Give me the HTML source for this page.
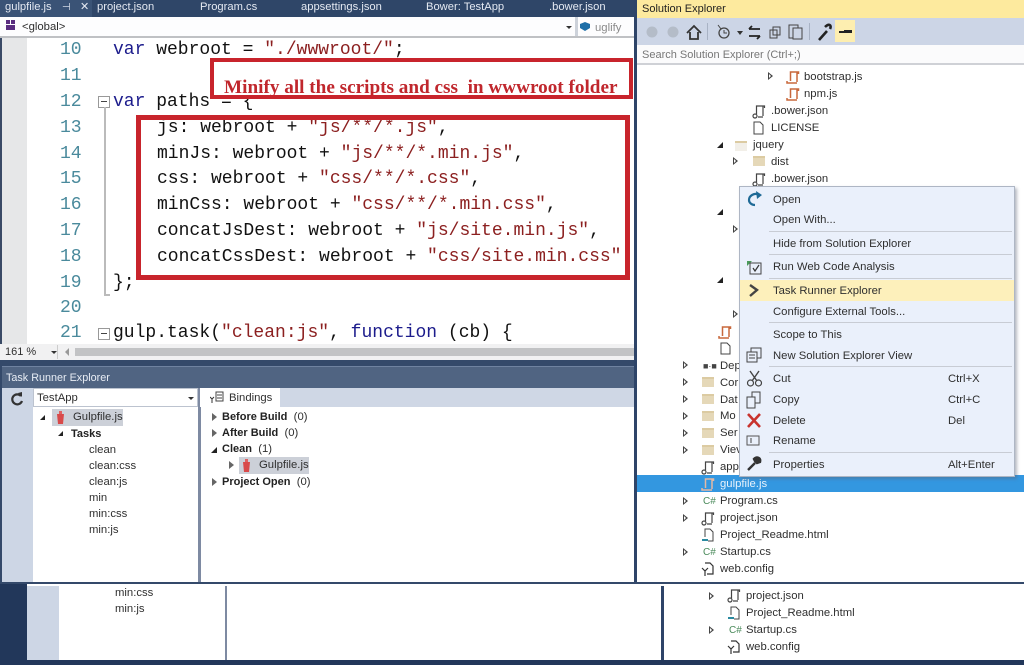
<!DOCTYPE html>
<html><head><meta charset="utf-8"><style>
html,body{margin:0;padding:0;width:1024px;height:665px;overflow:hidden;background:#fff}
div,span.a,svg{position:absolute}
.t{position:absolute;font:11.3px "Liberation Sans",sans-serif;color:#2f2f2f;white-space:pre;line-height:16px}
.t b{font-size:11px;color:#222}
.m{position:absolute;font:18px "Liberation Mono",monospace;color:#111;white-space:pre;line-height:22px;left:157px}
.n{position:absolute;font:18px "Liberation Mono",monospace;color:#4a8a9c;left:60px;line-height:22px}
.kw{color:#1c1c8c}.st{color:#8c2020}
.tab{position:absolute;top:0;font:11.2px "Liberation Sans",sans-serif;color:#e4e9f2;line-height:15px;white-space:pre}
.tri{position:absolute;width:0;height:0;border-left:5px solid #444;border-top:4.5px solid transparent;border-bottom:4.5px solid transparent}
.tri:after{content:"";position:absolute;left:-4px;top:-2.5px;width:0;height:0;border-left:2.5px solid #fff;border-top:2.5px solid transparent;border-bottom:2.5px solid transparent}
.open{position:absolute;width:0;height:0;border-bottom:6px solid #222;border-left:6px solid transparent}
.fold{position:absolute;width:12px;height:8px;background:#e5d8b8;border-top:2px solid #dccba2}
.sep{position:absolute;left:769px;width:243px;height:1px;background:#c8ccd4}
</style></head><body>

<!-- Tabs bar -->
<div style="left:0;top:0;width:634px;height:17px;background:#2f4668"></div>
<div style="left:0;top:0;width:92px;height:17px;background:#3a5376"></div>
<span class="tab" style="left:5px;">gulpfile.js</span>
<span class="tab" style="left:62px;font-size:10px">⊣</span>
<span class="tab" style="left:80px;">✕</span>
<span class="tab" style="left:97px;">project.json</span>
<span class="tab" style="left:200px;">Program.cs</span>
<span class="tab" style="left:301px;">appsettings.json</span>
<span class="tab" style="left:426px;">Bower: TestApp</span>
<span class="tab" style="left:549px;">.bower.json</span>

<!-- Nav bar -->
<div style="left:0;top:17px;width:634px;height:19px;background:#fdfdfe"></div>
<div style="left:0;top:36px;width:634px;height:2px;background:#bfc1c4"></div>
<svg style="left:6px;top:20px" width="10" height="11"><rect x="0" y="0" width="4" height="4" fill="#5a2d80"/><rect x="5" y="0" width="4" height="4" fill="#5a2d80"/><rect x="0" y="5" width="9" height="5" fill="#5a2d80"/></svg>
<span class="t" style="left:22px;top:19px">&lt;global&gt;</span>
<div style="left:566px;top:26px;width:0;height:0;border-top:3px solid #333;border-left:3px solid transparent;border-right:3px solid transparent"></div>
<div style="left:575px;top:17px;width:3px;height:19px;background:#cdd2da"></div>
<svg style="left:579px;top:21px" width="12" height="11"><path d="M1 3 6 1 11 3 11 7 6 10 1 7Z" fill="#1e6fa8"/></svg>
<span class="t" style="left:595px;top:20px;color:#8a8a8a">uglify</span>

<!-- Editor -->
<div style="left:0;top:38px;width:2px;height:306px;background:#3a4a66"></div>
<div style="left:2px;top:38px;width:25px;height:306px;background:#e6e7e8"></div>
<div style="left:634px;top:0;width:3px;height:582px;background:#2e4468"></div>

<span class="n" style="top:39px">10</span>
<span class="n" style="top:65px">11</span>
<span class="n" style="top:91px">12</span>
<span class="n" style="top:117px">13</span>
<span class="n" style="top:143px">14</span>
<span class="n" style="top:168px">15</span>
<span class="n" style="top:194px">16</span>
<span class="n" style="top:220px">17</span>
<span class="n" style="top:246px">18</span>
<span class="n" style="top:272px">19</span>
<span class="n" style="top:297px">20</span>
<span class="n" style="top:322px">21</span>

<div style="left:98px;top:96px;width:10px;height:10px;border:1px solid #999;background:#fff"></div>
<div style="left:101px;top:101px;width:6px;height:1px;background:#444"></div>
<div style="left:104px;top:107px;width:2px;height:188px;background:#bbb"></div>
<div style="left:104px;top:294px;width:6px;height:2px;background:#bbb"></div>
<div style="left:98px;top:328px;width:10px;height:10px;border:1px solid #999;background:#fff"></div>
<div style="left:101px;top:333px;width:6px;height:1px;background:#444"></div>

<span class="m" style="left:113px;top:39px"><span class="kw">var</span> webroot = <span class="st">"./wwwroot/"</span>;</span>
<span class="m" style="left:113px;top:91px"><span class="kw">var</span> paths = {</span>
<span class="m" style="top:117px">js: webroot + <span class="st">"js/**/*.js"</span>,</span>
<span class="m" style="top:143px">minJs: webroot + <span class="st">"js/**/*.min.js"</span>,</span>
<span class="m" style="top:168px">css: webroot + <span class="st">"css/**/*.css"</span>,</span>
<span class="m" style="top:194px">minCss: webroot + <span class="st">"css/**/*.min.css"</span>,</span>
<span class="m" style="top:220px">concatJsDest: webroot + <span class="st">"js/site.min.js"</span>,</span>
<span class="m" style="top:246px">concatCssDest: webroot + <span class="st">"css/site.min.css"</span></span>
<span class="m" style="left:113px;top:272px">};</span>
<span class="m" style="left:113px;top:322px">gulp.task(<span class="st">"clean:js"</span>, <span class="kw">function</span> (cb) {</span>

<!-- Red boxes -->
<div style="left:210px;top:58px;width:423px;height:41px;background:#fff"></div>
<div style="left:224px;top:77px;font:bold 19.2px 'Liberation Serif',serif;color:#c0272d;white-space:pre;line-height:22px">Minify all the scripts and css  in wwwroot folder</div>
<div style="left:210px;top:58px;width:423px;height:41px;box-sizing:border-box;border:4.5px solid #c8242c"></div>
<div style="left:136px;top:115px;width:494px;height:165px;box-sizing:border-box;border:5px solid #c8242c"></div>

<!-- status -->
<div style="left:0;top:344px;width:634px;height:16px;background:#f1f1f2"></div>
<span class="t" style="left:5px;top:344px;font-size:11px">161 %</span>
<div style="left:51px;top:351px;width:0;height:0;border-top:3px solid #333;border-left:3px solid transparent;border-right:3px solid transparent"></div>
<div style="left:57px;top:345px;width:1px;height:14px;background:#ccc"></div>
<div style="left:65px;top:348px;width:0;height:0;border-right:4px solid #999;border-top:4px solid transparent;border-bottom:4px solid transparent"></div>
<div style="left:75px;top:348px;width:559px;height:8px;background:#c2c3c5"></div>

<!-- Task Runner -->
<div style="left:0;top:360px;width:634px;height:6px;background:#34496a"></div>
<div style="left:0;top:366px;width:634px;height:22px;background:#506482;border-top:1px solid #6f82a0;box-sizing:border-box"></div>
<span class="t" style="left:6px;top:370px;color:#e8edf5;font-size:10.8px">Task Runner Explorer</span>
<div style="left:2px;top:388px;width:31px;height:194px;background:#cdd6e5"></div>
<div style="left:0;top:366px;width:2px;height:216px;background:#34496a"></div>
<svg style="left:9px;top:391px" width="16" height="17"><path d="M12 5A5 5 0 1 0 13 10" fill="none" stroke="#333" stroke-width="2.2"/><path d="M9 2 13 1 13 6Z" fill="#333"/></svg>
<div style="left:33px;top:388px;width:165px;height:19px;background:#fff;border:1px solid #bcc3cf;box-sizing:border-box"></div>
<span class="t" style="left:37px;top:390px">TestApp</span>
<div style="left:188px;top:397px;width:0;height:0;border-top:3px solid #333;border-left:3px solid transparent;border-right:3px solid transparent"></div>
<div style="left:52px;top:409px;width:71px;height:17px;background:#ccd0d8"></div>
<div class="open" style="left:40px;top:415px;border-bottom-width:5px;border-left-width:5px"></div>
<svg style="left:55px;top:410px" width="11" height="15"><path d="M2 4H9L8 14H3Z" fill="#d84a4a"/><path d="M4 1H7V4H4Z" fill="#e06060"/></svg>
<span class="t" style="left:73px;top:409px">Gulpfile.js</span>
<div class="open" style="left:58px;top:431px;border-bottom-width:5px;border-left-width:5px"></div>
<span class="t" style="left:71px;top:426px"><b>Tasks</b></span>
<span class="t" style="left:89px;top:442px">clean</span>
<span class="t" style="left:89px;top:458px">clean:css</span>
<span class="t" style="left:89px;top:474px">clean:js</span>
<span class="t" style="left:89px;top:490px">min</span>
<span class="t" style="left:89px;top:506px">min:css</span>
<span class="t" style="left:89px;top:522px">min:js</span>

<div style="left:198px;top:388px;width:2.5px;height:194px;background:#7e8aa2"></div>
<div style="left:200px;top:388px;width:434px;height:19px;background:#cfd7e5"></div>
<div style="left:200px;top:388px;width:80px;height:19px;background:#fff"></div>
<svg style="left:210px;top:391px" width="14" height="14"><path d="M6 1H13V10H6ZM7 4H12M7 7H12" fill="none" stroke="#444"/><path d="M2 8V12M0 6 2 8 4 6" fill="none" stroke="#333"/></svg>
<span class="t" style="left:229px;top:390px">Bindings</span>

<div style="left:212px;top:413px;width:0;height:0;border-left:5px solid #666;border-top:4px solid transparent;border-bottom:4px solid transparent"></div>
<span class="t" style="left:222px;top:409px"><b>Before Build</b>  (0)</span>
<div style="left:212px;top:429px;width:0;height:0;border-left:5px solid #666;border-top:4px solid transparent;border-bottom:4px solid transparent"></div>
<span class="t" style="left:222px;top:425px"><b>After Build</b>  (0)</span>
<div class="open" style="left:211px;top:447px;border-bottom-width:6px;border-left-width:6px"></div>
<span class="t" style="left:222px;top:441px"><b>Clean</b>  (1)</span>
<div style="left:239px;top:457px;width:70px;height:17px;background:#ccd0d8"></div>
<div style="left:229px;top:461px;width:0;height:0;border-left:5px solid #666;border-top:4px solid transparent;border-bottom:4px solid transparent"></div>
<svg style="left:241px;top:458px" width="11" height="15"><path d="M2 4H9L8 14H3Z" fill="#d84a4a"/><path d="M4 1H7V4H4Z" fill="#e06060"/></svg>
<span class="t" style="left:259px;top:457px">Gulpfile.js</span>
<div style="left:212px;top:478px;width:0;height:0;border-left:5px solid #666;border-top:4px solid transparent;border-bottom:4px solid transparent"></div>
<span class="t" style="left:222px;top:474px"><b>Project Open</b>  (0)</span>

<!-- Solution Explorer -->
<div style="left:637px;top:0;width:387px;height:18px;background:#fdea9e"></div>
<span class="t" style="left:642px;top:1px;font-size:11px;color:#222">Solution Explorer</span>
<div style="left:637px;top:18px;width:387px;height:27px;background:#ccd5e6"></div>
<div style="left:637px;top:45px;width:387px;height:18px;background:#fbfbfc;border-bottom:2px solid #cfd1d6"></div>
<span class="t" style="left:642px;top:47px;color:#777;font-size:11px">Search Solution Explorer (Ctrl+;)</span>

<svg style="left:640px;top:18px" width="240" height="27">
<circle cx="12" cy="14" r="5.500" fill="#b4bcc8"/><circle cx="33" cy="14" r="5.500" fill="#b4bcc8"/>
<path d="M47 15 54 8 61 15M50 14V21H58V14" fill="none" stroke="#333" stroke-width="1.800"/>
<rect x="67" y="5" width="1" height="17" fill="#a8b2c4"/>
<circle cx="84" cy="15" r="5" fill="none" stroke="#444" stroke-width="1.300"/><path d="M84 12V15H87M78 7 81 11" stroke="#444" fill="none"/>
<path d="M97 13 103 13 100 17Z" fill="#333"/>
<path d="M109 11H120M109 11 112 8M109 18H120M120 18 117 21" stroke="#222" stroke-width="1.800" fill="none"/>
<rect x="130" y="12" width="7" height="8" fill="none" stroke="#444"/><rect x="133" y="9" width="7" height="8" fill="none" stroke="#444"/>
<rect x="149" y="7" width="9" height="13" fill="none" stroke="#444"/><rect x="153" y="10" width="9" height="11" fill="#ccd5e6" stroke="#444"/>
<rect x="169" y="5" width="1" height="17" fill="#a8b2c4"/>
<path d="M179 22 187 13M185 9C189 5 192 7 190 11" stroke="#222" stroke-width="2.600" fill="none"/>
<rect x="195" y="2" width="20" height="22" fill="#fdeeb0"/><rect x="204" y="12" width="8" height="3" fill="#222"/><rect x="199" y="13" width="6" height="2" fill="#222"/>
</svg>

<div class="tri" style="left:768px;top:72px"></div>
<svg style="left:786px;top:70px" width="14" height="15"><path d="M4.500 11V2H12.500V4M11 2V12M1 11V13H11" fill="none" stroke="#c8683c" stroke-width="1.500"/></svg>
<span class="t" style="left:804px;top:69px">bootstrap.js</span>
<svg style="left:786px;top:87px" width="14" height="15"><path d="M4.500 11V2H12.500V4M11 2V12M1 11V13H11" fill="none" stroke="#c8683c" stroke-width="1.500"/></svg>
<span class="t" style="left:804px;top:86px">npm.js</span>
<svg style="left:752px;top:104px" width="14" height="15"><path d="M4.500 10V2H12.500V4M11 2V12M6 13H11" fill="none" stroke="#444" stroke-width="1.200"/><circle cx="3" cy="12" r="2" fill="none" stroke="#444" stroke-width="1.200"/></svg>
<span class="t" style="left:771px;top:103px">.bower.json</span>
<svg style="left:753px;top:121px" width="11" height="14"><path d="M1 1H7L10 4V13H1Z" fill="none" stroke="#444"/></svg>
<span class="t" style="left:771px;top:120px">LICENSE</span>
<div class="open" style="left:717px;top:142px"></div>
<div class="fold" style="left:735px;top:141px;background:#f2efe8"></div>
<span class="t" style="left:753px;top:137px">jquery</span>
<div class="tri" style="left:733px;top:157px"></div>
<div class="fold" style="left:753px;top:156px"></div>
<span class="t" style="left:771px;top:154px">dist</span>
<svg style="left:752px;top:172px" width="14" height="15"><path d="M4.500 10V2H12.500V4M11 2V12M6 13H11" fill="none" stroke="#444" stroke-width="1.200"/><circle cx="3" cy="12" r="2" fill="none" stroke="#444" stroke-width="1.200"/></svg>
<span class="t" style="left:771px;top:171px">.bower.json</span>

<div class="open" style="left:717px;top:209px"></div>
<div class="tri" style="left:733px;top:225px"></div>
<div class="open" style="left:717px;top:277px"></div>
<div class="tri" style="left:733px;top:310px"></div>
<svg style="left:718px;top:325px" width="14" height="15"><path d="M4.500 11V2H12.500V4M11 2V12M1 11V13H11" fill="none" stroke="#c8683c" stroke-width="1.500"/></svg>
<svg style="left:720px;top:342px" width="11" height="13"><path d="M1 1H7L10 4V12H1Z" fill="none" stroke="#444"/></svg>

<div class="tri" style="left:683px;top:361px"></div>
<span class="t" style="left:703px;top:358px;font-size:9px;color:#444">■·■</span>
<span class="t" style="left:720px;top:358px">Dep</span>
<div class="tri" style="left:683px;top:378px"></div><div class="fold" style="left:702px;top:377px"></div><span class="t" style="left:720px;top:375px">Cor</span>
<div class="tri" style="left:683px;top:395px"></div><div class="fold" style="left:702px;top:394px"></div><span class="t" style="left:720px;top:392px">Dat</span>
<div class="tri" style="left:683px;top:412px"></div><div class="fold" style="left:702px;top:411px"></div><span class="t" style="left:720px;top:408px">Mo</span>
<div class="tri" style="left:683px;top:429px"></div><div class="fold" style="left:702px;top:428px"></div><span class="t" style="left:720px;top:425px">Ser</span>
<div class="tri" style="left:683px;top:446px"></div><div class="fold" style="left:702px;top:445px"></div><span class="t" style="left:720px;top:442px">Viev</span>
<svg style="left:701px;top:460px" width="14" height="15"><path d="M4.500 10V2H12.500V4M11 2V12M6 13H11" fill="none" stroke="#444" stroke-width="1.200"/><circle cx="3" cy="12" r="2" fill="none" stroke="#444" stroke-width="1.200"/></svg>
<span class="t" style="left:720px;top:459px">app</span>

<div style="left:637px;top:475px;width:387px;height:17px;background:#3397e0"></div>
<svg style="left:701px;top:477px" width="14" height="15"><path d="M4.500 11V2H12.500V4M11 2V12M1 11V13H11" fill="none" stroke="#e3b9a4" stroke-width="1.500"/></svg>
<span class="t" style="left:720px;top:476px;color:#e8f3fc">gulpfile.js</span>

<div class="tri" style="left:683px;top:497px"></div>
<span class="t" style="left:703px;top:494px;color:#4a8a5a;font-size:10px">C#</span>
<span class="t" style="left:720px;top:493px">Program.cs</span>
<div class="tri" style="left:683px;top:514px"></div>
<svg style="left:701px;top:511px" width="14" height="15"><path d="M4.500 10V2H12.500V4M11 2V12M6 13H11" fill="none" stroke="#444" stroke-width="1.200"/><circle cx="3" cy="12" r="2" fill="none" stroke="#444" stroke-width="1.200"/></svg>
<span class="t" style="left:720px;top:510px">project.json</span>
<svg style="left:701px;top:528px" width="13" height="15"><path d="M4 9V1H9L12 4V13H7" fill="none" stroke="#444"/><path d="M1 12H7" stroke="#2a8aa0" stroke-width="2"/></svg>
<span class="t" style="left:720px;top:527px">Project_Readme.html</span>
<div class="tri" style="left:683px;top:548px"></div>
<span class="t" style="left:703px;top:545px;color:#4a8a5a;font-size:10px">C#</span>
<span class="t" style="left:720px;top:544px">Startup.cs</span>
<svg style="left:701px;top:562px" width="13" height="15"><path d="M4 1H9L12 4V12H6M1 6 4 9 7 6M4 9V14" fill="none" stroke="#333" stroke-width="1.200"/></svg>
<span class="t" style="left:720px;top:561px">web.config</span>

<!-- Context menu -->
<div style="left:739px;top:186px;width:276px;height:291px;background:#eaf0fb;border:1px solid #aeb6c4;box-sizing:border-box;box-shadow:2px 2px 3px rgba(90,100,120,.45)"></div>
<div class="sep" style="top:231px"></div>
<div class="sep" style="top:254px"></div>
<div class="sep" style="top:278px"></div>
<div class="sep" style="top:322px"></div>
<div class="sep" style="top:366px"></div>
<div class="sep" style="top:452px"></div>
<div style="left:740px;top:280px;width:274px;height:21px;background:#fdf0bb"></div>
<span class="t" style="left:773px;top:192px">Open</span>
<span class="t" style="left:773px;top:212px">Open With...</span>
<span class="t" style="left:773px;top:236px">Hide from Solution Explorer</span>
<span class="t" style="left:773px;top:259px">Run Web Code Analysis</span>
<span class="t" style="left:773px;top:283px">Task Runner Explorer</span>
<span class="t" style="left:773px;top:304px">Configure External Tools...</span>
<span class="t" style="left:773px;top:327px">Scope to This</span>
<span class="t" style="left:773px;top:348px">New Solution Explorer View</span>
<span class="t" style="left:773px;top:371px">Cut</span><span class="t" style="left:948px;top:371px">Ctrl+X</span>
<span class="t" style="left:773px;top:392px">Copy</span><span class="t" style="left:948px;top:392px">Ctrl+C</span>
<span class="t" style="left:773px;top:413px">Delete</span><span class="t" style="left:948px;top:413px">Del</span>
<span class="t" style="left:773px;top:433px">Rename</span>
<span class="t" style="left:773px;top:457px">Properties</span><span class="t" style="left:948px;top:457px">Alt+Enter</span>
<svg style="left:745px;top:190px" width="20" height="20"><path d="M15 5C9 2 4 6 4 10C4 13 7 15 10 15" fill="none" stroke="#1f6a96" stroke-width="2.200"/><path d="M11 1 17 5 12 9Z" fill="#1f6a96"/></svg>
<svg style="left:746px;top:260px" width="18" height="16"><path d="M1 1 6 1 1 6Z" fill="#4a9a5a"/><rect x="4" y="3" width="11" height="11" fill="none" stroke="#444"/><path d="M7 8 9 11 13 5" fill="none" stroke="#333" stroke-width="1.200"/></svg>
<svg style="left:748px;top:282px" width="12" height="17"><path d="M2 3 9 8 2 14" fill="none" stroke="#444" stroke-width="2.400"/></svg>
<svg style="left:746px;top:347px" width="18" height="16"><rect x="5" y="1" width="10" height="10" fill="none" stroke="#444"/><rect x="1" y="5" width="10" height="10" fill="#eaf0fb" stroke="#444"/><path d="M3 8H9M3 11H9" stroke="#444"/></svg>
<svg style="left:746px;top:370px" width="18" height="17"><path d="M4 1 11 11M13 1 6 11" stroke="#444" stroke-width="1.400" fill="none"/><circle cx="4.500" cy="13" r="3" fill="none" stroke="#444" stroke-width="1.200"/><circle cx="12.500" cy="13" r="3" fill="none" stroke="#444" stroke-width="1.200"/></svg>
<svg style="left:746px;top:391px" width="18" height="18"><rect x="1" y="6" width="8" height="11" fill="#eaf0fb" stroke="#444"/><path d="M6 6V1H14V12H9" fill="none" stroke="#444"/></svg>
<svg style="left:746px;top:412px" width="18" height="17"><path d="M2 2 14 15M14 2 2 15" stroke="#c8332e" stroke-width="2.600"/></svg>
<svg style="left:746px;top:434px" width="18" height="14"><rect x="1" y="2" width="12" height="9" fill="none" stroke="#555"/><path d="M5 4V9" stroke="#444"/></svg>
<svg style="left:746px;top:456px" width="16" height="16"><path d="M2 14 9 7M8 3C11 0 15 2 14 6L11 7 9 5Z" stroke="#333" stroke-width="2.400" fill="#333"/></svg>

<!-- bottom -->
<div style="left:0;top:582px;width:1024px;height:2px;background:#34496a"></div>
<div style="left:0;top:584px;width:27px;height:81px;background:#22375a"></div>
<div style="left:27px;top:586px;width:32px;height:74px;background:#cdd6e5"></div>
<span class="t" style="left:115px;top:585px">min:css</span>
<span class="t" style="left:115px;top:601px">min:js</span>
<div style="left:224.500px;top:586px;width:2.500px;height:74px;background:#7e8aa2"></div>
<div style="left:661px;top:586px;width:3px;height:75px;background:#2e4468"></div>
<div style="left:27px;top:660px;width:997px;height:5px;background:#22375a"></div>
<div class="tri" style="left:709px;top:592px"></div>
<svg style="left:727px;top:588px" width="14" height="15"><path d="M4.500 10V2H12.500V4M11 2V12M6 13H11" fill="none" stroke="#444" stroke-width="1.200"/><circle cx="3" cy="12" r="2" fill="none" stroke="#444" stroke-width="1.200"/></svg>
<span class="t" style="left:746px;top:588px">project.json</span>
<svg style="left:727px;top:606px" width="13" height="15"><path d="M4 9V1H9L12 4V13H7" fill="none" stroke="#444"/><path d="M1 12H7" stroke="#2a8aa0" stroke-width="2"/></svg>
<span class="t" style="left:746px;top:605px">Project_Readme.html</span>
<div class="tri" style="left:709px;top:626px"></div>
<span class="t" style="left:729px;top:623px;color:#4a8a5a;font-size:10px">C#</span>
<span class="t" style="left:746px;top:622px">Startup.cs</span>
<svg style="left:727px;top:640px" width="13" height="15"><path d="M4 1H9L12 4V12H6M1 6 4 9 7 6M4 9V14" fill="none" stroke="#333" stroke-width="1.200"/></svg>
<span class="t" style="left:746px;top:639px">web.config</span>
</body></html>
